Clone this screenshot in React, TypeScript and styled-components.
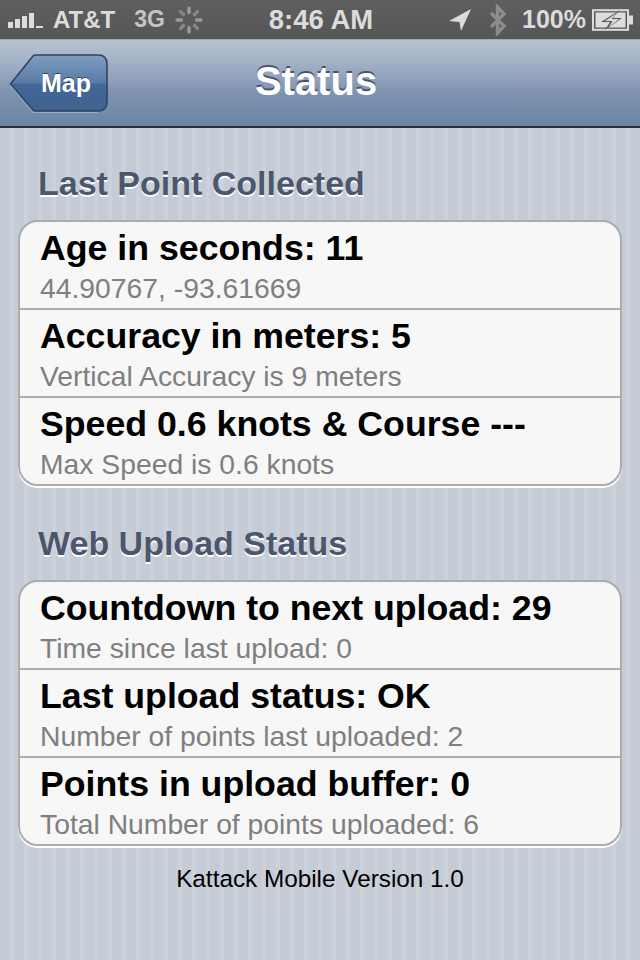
import React from "react";
import styled, { createGlobalStyle } from "styled-components";

const Global = createGlobalStyle`
  html, body { margin: 0; padding: 0; background: #c5ccd6; }
  body { font-family: "Liberation Sans", Arial, sans-serif; }
  #root { width: 640px; height: 960px; overflow: hidden; }
`;

const Screen = styled.div`
  width: 640px;
  height: 960px;
  display: flex;
  flex-direction: column;
  background: repeating-linear-gradient(90deg, #c5ccd6 0 10px, #cbd2dc 10px 14px);
`;

const StatusBar = styled.div`
  height: 39px;
  flex: none;
  display: grid;
  grid-template-columns: 1fr auto 1fr;
  align-items: center;
  padding: 0 6px 0 8px;
  background: linear-gradient(#5f5f5f, #565656);
  border-bottom: 1px solid #a8a8a8;
  color: #dcdcdc;
  font-weight: 700;
`;

const StatusSide = styled.div<{ $end?: boolean }>`
  display: flex;
  align-items: center;
  justify-content: ${(p) => (p.$end ? "flex-end" : "flex-start")};
`;

const StatusText = styled.span<{ $size?: number; $gap?: number; $dim?: boolean }>`
  font-size: ${(p) => p.$size ?? 24}px;
  margin-left: ${(p) => p.$gap ?? 0}px;
  color: ${(p) => (p.$dim ? "#c4c4c4" : "#dcdcdc")};
  line-height: 1;
  white-space: nowrap;
`;

const Icon = styled.svg<{ $gap?: number }>`
  display: block;
  flex: none;
  margin-left: ${(p) => p.$gap ?? 0}px;
`;

const NavBar = styled.div`
  height: 86px;
  flex: none;
  position: relative;
  display: flex;
  align-items: center;
  justify-content: center;
  padding-right: 8px;
  background: linear-gradient(#b8c4d3 0, #9eadc4 30%, #7e93b1 62%, #6d84a5 100%);
  border-bottom: 2px solid #2d3239;
  box-sizing: content-box;
`;

const NavTitle = styled.div`
  font-size: 40px;
  font-weight: 700;
  color: #fff;
  line-height: 1;
  text-shadow: 0 -2px 0 #47566e;
  transform: translateY(-2px);
`;

const BackButton = styled.div`
  position: absolute;
  left: 9px;
  top: 14px;
  width: 100px;
  height: 60px;
`;

const BackLabel = styled.span`
  position: absolute;
  left: 32px;
  top: 15px;
  font-size: 25px;
  line-height: 28px;
  font-weight: 700;
  color: #fff;
  text-shadow: 0 -1px 0 #2b4468;
`;

const Content = styled.div`
  flex: 1;
  display: flex;
  flex-direction: column;
  padding: 0 18px;
`;

const SectionTitle = styled.h2<{ $top: number }>`
  margin: ${(p) => p.$top}px 0 18px 20px;
  height: 37px;
  font-size: 34px;
  line-height: 37px;
  font-weight: 700;
  color: #4c566c;
  text-shadow: 0 2px 0 #fff;
`;

const Card = styled.div`
  border: 2px solid #a9abad;
  border-radius: 20px;
  background: #f7f7f7;
  box-shadow: 0 2px 0 #fff;
  overflow: hidden;
`;

const Row = styled.div`
  height: 86px;
  box-sizing: content-box;
  padding-left: 20px;
  display: flex;
  flex-direction: column;
  &:not(:last-child) { border-bottom: 2px solid #abadaf; }
`;

const Primary = styled.div`
  font-size: 35.7px;
  line-height: 40px;
  margin-top: 6px;
  font-weight: 700;
  color: #000;
  white-space: nowrap;
`;

const Secondary = styled.div`
  font-size: 28.3px;
  line-height: 32px;
  margin-top: 4px;
  color: #7f7f7f;
  white-space: nowrap;
`;

const Footer = styled.div`
  margin-top: 19px;
  text-align: center;
  font-size: 24.3px;
  line-height: 28px;
  color: #000;
`;

const Signal = () => (
  <Icon width="36" height="16" viewBox="0 0 36 16">
    <g fill="#dcdcdc">
      <rect x="0" y="10" width="5" height="6" />
      <rect x="7" y="7" width="5" height="9" />
      <rect x="14" y="4" width="5" height="12" />
      <rect x="21" y="1" width="5" height="15" />
      <rect x="28" y="14" width="7" height="2" />
    </g>
  </Icon>
);

const Spinner = () => (
  <Icon $gap={10} width="28" height="28" viewBox="-14 -14 28 28">
    {Array.from({ length: 8 }).map((_, i) => (
      <rect
        key={i}
        x="-1.7"
        y="-13.5"
        width="3.4"
        height="7.5"
        rx="1.5"
        fill="#9a9a9a"
        opacity={i % 2 ? 0.7 : 1}
        transform={`rotate(${i * 45})`}
      />
    ))}
  </Icon>
);

const LocationArrow = () => (
  <Icon width="24" height="24" viewBox="0 0 24 24">
    <path d="M23 1 L1 13 L11.5 14 L13 23 Z" fill="#dcdcdc" />
  </Icon>
);

const Bluetooth = () => (
  <Icon $gap={16} width="20" height="32" viewBox="0 0 20 32">
    <path d="M3 9 L16 22 L9.5 29 V3 L16 10 L3 23" fill="none" stroke="#8c8c8c" strokeWidth="3.4" />
  </Icon>
);

const Battery = () => (
  <Icon $gap={6} width="42" height="22" viewBox="0 0 42 22">
    <rect x="1" y="1.2" width="35" height="19.6" fill="none" stroke="#dcdcdc" strokeWidth="2" />
    <rect x="3.5" y="3.5" width="30" height="15" fill="#dcdcdc" />
    <rect x="37" y="6.5" width="4" height="9" fill="#dcdcdc" />
    <path d="M28 1 L9 13 H18 L13 21 L30 9 H21 Z" fill="#5a5a5a" />
    <path d="M25.5 3.5 L13 12 H20.5 L17 18 L27 10 H19.5 Z" fill="#dcdcdc" />
  </Icon>
);

const BackShape = () => (
  <Icon width="100" height="60" viewBox="0 0 100 60">
    <defs>
      <linearGradient id="back" x1="0" y1="0" x2="0" y2="1">
        <stop offset="0" stopColor="#7f9cc0" />
        <stop offset="0.5" stopColor="#587ba6" />
        <stop offset="0.52" stopColor="#436796" />
        <stop offset="1" stopColor="#3f6291" />
      </linearGradient>
    </defs>
    <path d="M1.5 30 L24 2 Q25 1 27 1 H89 Q98 1 98 10 V48 Q98 57 89 57 H27 Q25 57 24 56 Z" fill="url(#back)" stroke="#2e4464" strokeWidth="1.6" />
    <path d="M1 31 L24 58.5 H89" fill="none" stroke="#a9b9cd" strokeWidth="1" opacity="0.7" />
  </Icon>
);

const sections = [
  {
    title: "Last Point Collected",
    top: 37,
    rows: [
      ["Age in seconds: 11", "44.90767, -93.61669"],
      ["Accuracy in meters: 5", "Vertical Accuracy is 9 meters"],
      ["Speed 0.6 knots & Course ---", "Max Speed is 0.6 knots"],
    ],
  },
  {
    title: "Web Upload Status",
    top: 39,
    rows: [
      ["Countdown to next upload: 29", "Time since last upload: 0"],
      ["Last upload status: OK", "Number of points last uploaded: 2"],
      ["Points in upload buffer: 0", "Total Number of points uploaded: 6"],
    ],
  },
];

export default function App() {
  return (
    <Screen>
      <Global />
      <StatusBar>
        <StatusSide>
          <Signal />
          <StatusText $gap={9}>AT&amp;T</StatusText>
          <StatusText $gap={19} $size={23} $dim>3G</StatusText>
          <Spinner />
        </StatusSide>
        <StatusText $size={27.5}>8:46 AM</StatusText>
        <StatusSide $end>
          <LocationArrow />
          <Bluetooth />
          <StatusText $gap={14} $size={25}>100%</StatusText>
          <Battery />
        </StatusSide>
      </StatusBar>
      <NavBar>
        <BackButton>
          <BackShape />
          <BackLabel>Map</BackLabel>
        </BackButton>
        <NavTitle>Status</NavTitle>
      </NavBar>
      <Content>
        {sections.map((s) => (
          <React.Fragment key={s.title}>
            <SectionTitle $top={s.top}>{s.title}</SectionTitle>
            <Card>
              {s.rows.map(([a, b]) => (
                <Row key={a}>
                  <Primary>{a}</Primary>
                  <Secondary>{b}</Secondary>
                </Row>
              ))}
            </Card>
          </React.Fragment>
        ))}
        <Footer>Kattack Mobile Version 1.0</Footer>
      </Content>
    </Screen>
  );
}
